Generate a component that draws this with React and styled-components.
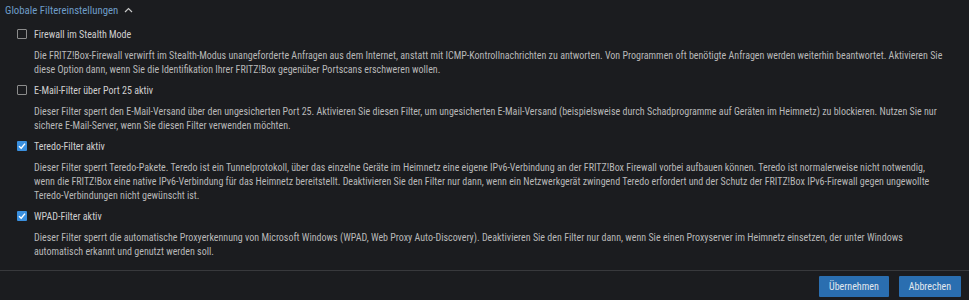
import React, { useState } from 'react';
import styled, { createGlobalStyle } from 'styled-components';

const GlobalStyle = createGlobalStyle`
    html, body {
        margin: 0;
        background: #1b1c1f;
    }
    body {
        font-family: "Roboto Condensed", Lato, "Noto Sans", sans-serif;
        font-size: 10px;
        color: #c4c4c4;
    }
`;

const options = [
    {
        id: 'stealth',
        label: 'Firewall im Stealth Mode',
        checked: false,
        text: 'Die FRITZ!Box-Firewall verwirft im Stealth-Modus unangeforderte Anfragen aus dem Internet, anstatt mit ICMP-Kontrollnachrichten zu antworten. Von Programmen oft benötigte Anfragen werden weiterhin beantwortet. Aktivieren Sie diese Option dann, wenn Sie die Identifikation Ihrer FRITZ!Box gegenüber Portscans erschweren wollen.'
    },
    {
        id: 'port25',
        label: 'E-Mail-Filter über Port 25 aktiv',
        checked: false,
        text: 'Dieser Filter sperrt den E-Mail-Versand über den ungesicherten Port 25. Aktivieren Sie diesen Filter, um ungesicherten E-Mail-Versand (beispielsweise durch Schadprogramme auf Geräten im Heimnetz) zu blockieren. Nutzen Sie nur sichere E-Mail-Server, wenn Sie diesen Filter verwenden möchten.'
    },
    {
        id: 'teredo',
        label: 'Teredo-Filter aktiv',
        checked: true,
        text: 'Dieser Filter sperrt Teredo-Pakete. Teredo ist ein Tunnelprotokoll, über das einzelne Geräte im Heimnetz eine eigene IPv6-Verbindung an der FRITZ!Box Firewall vorbei aufbauen können. Teredo ist normalerweise nicht notwendig, wenn die FRITZ!Box eine native IPv6-Verbindung für das Heimnetz bereitstellt. Deaktivieren Sie den Filter nur dann, wenn ein Netzwerkgerät zwingend Teredo erfordert und der Schutz der FRITZ!Box IPv6-Firewall gegen ungewollte Teredo-Verbindungen nicht gewünscht ist.'
    },
    {
        id: 'wpad',
        label: 'WPAD-Filter aktiv',
        checked: true,
        text: 'Dieser Filter sperrt die automatische Proxyerkennung von Microsoft Windows (WPAD, Web Proxy Auto-Discovery). Deaktivieren Sie den Filter nur dann, wenn Sie einen Proxyserver im Heimnetz einsetzen, der unter Windows automatisch erkannt und genutzt werden soll.'
    }
];

function Checkbox({ checked }) {
    return (
        <Box $checked={checked}>
            {checked && (
                <svg width="8" height="8" viewBox="0 0 8 8">
                    <path d="M1 4.2 L3.2 6.3 L7 1.6" fill="none" stroke="#fff" strokeWidth="1.4" />
                </svg>
            )}
        </Box>
    );
}

function App() {
    const [ values, setValues ] = useState(options.map(o => o.checked));

    const toggle = (i) => {
        setValues(values.map((v, idx) => idx === i ? !v : v));
    }

    return (
        <Page>
            <GlobalStyle />
            <Title>
                Globale Filtereinstellungen
                <svg width="9" height="6" viewBox="0 0 9 6">
                    <path d="M1 5 L4.5 1.5 L8 5" fill="none" stroke="#c8c8c8" strokeWidth="1.2" />
                </svg>
            </Title>
            <List>
                {options.map((opt, i) => (
                    <Option key={opt.id}>
                        <Row onClick={() => toggle(i)}>
                            <Checkbox checked={values[i]} />
                            <Label>{opt.label}</Label>
                        </Row>
                        <Desc>{opt.text}</Desc>
                    </Option>
                ))}
            </List>
            <Footer>
                <Button>Übernehmen</Button>
                <Button>Abbrechen</Button>
            </Footer>
        </Page>
    )
}

const Page = styled.div`
    width: 969px;
    height: 300px;
    display: flex;
    flex-direction: column;
`;

const Title = styled.div`
    height: 20px;
    padding-left: 5px;
    display: flex;
    align-items: center;
    gap: 6px;
    color: #6e9cc8;
    font-size: 10.8px;
`;

const List = styled.div`
    padding: 6px 0 6px 17px;
    border-bottom: 1px solid #38393c;
`;

const Option = styled.div`
    margin-bottom: 5px;
`;

const Row = styled.label`
    height: 16px;
    display: flex;
    align-items: center;
    gap: 7px;
    cursor: pointer;
`;

const Box = styled.span`
    width: 10px;
    height: 10px;
    box-sizing: border-box;
    border-radius: 1px;
    display: flex;
    align-items: center;
    justify-content: center;
    border: ${p => p.$checked ? 'none' : '1.5px solid #8c8c8c'};
    background: ${p => p.$checked ? '#3a8fde' : 'transparent'};
`;

const Label = styled.span`
    color: #cfcfcf;
`;

const Desc = styled.p`
    margin: 7px 25px 0 17px;
    line-height: 14px;
    color: #b8b8b8;
`;

const Footer = styled.div`
    display: flex;
    justify-content: flex-end;
    gap: 10px;
    padding: 5px 8px 0 0;
`;

const Button = styled.button`
    height: 21px;
    padding: 0 10px;
    border: none;
    border-radius: 1px;
    background: #2a6eb0;
    color: #e2e8ee;
    font-family: inherit;
    font-size: 10px;
    cursor: pointer;
`;

export default App
